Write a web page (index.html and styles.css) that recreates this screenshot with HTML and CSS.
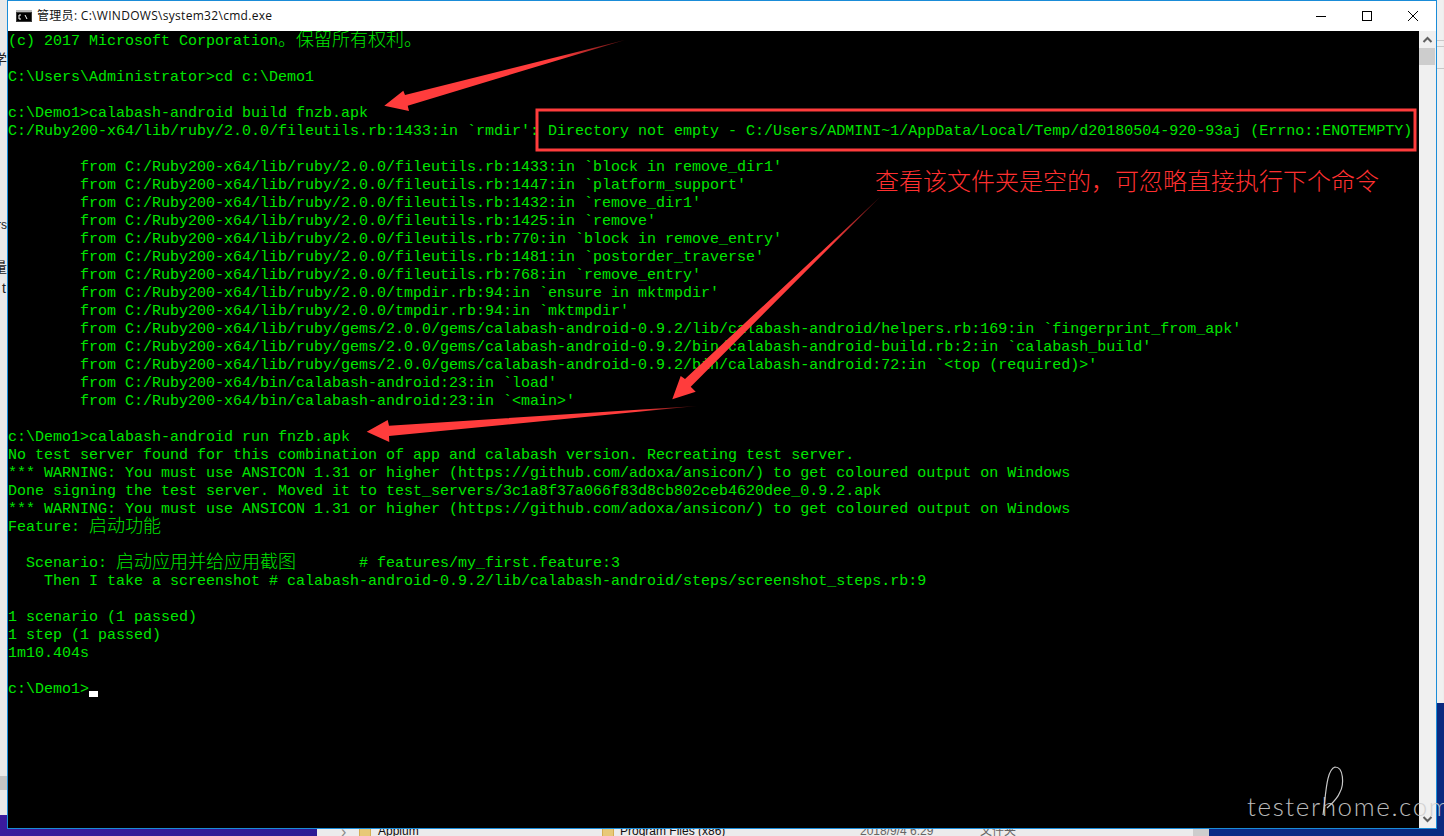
FILE: index.html
```html
<!DOCTYPE html>
<html lang="zh-CN">
<head>
<meta charset="utf-8">
<title>cmd.exe</title>
<link rel="stylesheet" href="styles.css">
</head>
<body>
<div class="desktop">
  <div class="bg-left">
    <span class="frag frag-a">学</span>
    <span class="frag frag-b">rs</span>
    <span class="frag frag-c">量</span>
    <span class="frag frag-d">t</span>
    <div class="bg-left-band"></div>
  </div>
  <div class="bg-right">
    <i class="rule rule-a"></i><i class="rule rule-b"></i><i class="rule rule-c"></i>
  </div>
  <div class="explorer">
    <span class="ex-chevron">›</span>
    <span class="ex-folder ex-folder-a"></span><span class="ex-name ex-name-a">Appium</span>
    <span class="ex-folder ex-folder-b"></span><span class="ex-name ex-name-b">Program Files (x86)</span>
    <span class="ex-name ex-date">2018/9/4 6:29</span>
    <span class="ex-name ex-type">文件夹</span>
    <span class="ex-scroll"></span>
  </div>

  <div class="window">
    <header class="titlebar">
      <svg class="app-icon" width="16" height="12" viewBox="0 0 16 12"><rect width="16" height="12" fill="#3a3a3a"/><rect x="0" y="0" width="16" height="2" fill="#b8b8b8"/><rect x="1" y="3" width="14" height="8" fill="#000"/><path d="M5 5H3v4h2M7 6v0M7 8v0M9 5l2 4" stroke="#fff" stroke-width="1" fill="none"/></svg>
      <span class="title-text">管理员: C:\WINDOWS\system32\cmd.exe</span>
      <div class="controls">
        <svg class="ctrl" width="46" height="30" viewBox="0 0 46 30"><path d="M18 15.5h10" stroke="#000" fill="none"/></svg>
        <svg class="ctrl" width="46" height="30" viewBox="0 0 46 30"><rect x="18.5" y="10.5" width="9" height="9" stroke="#000" fill="none"/></svg>
        <svg class="ctrl" width="46" height="30" viewBox="0 0 46 30"><path d="M18 10l10 10M28 10L18 20" stroke="#000" fill="none"/></svg>
      </div>
    </header>
    <div class="client">
      <main class="console">
<div class="ln">(c) 2017 Microsoft Corporation<span class="cn">。保留所有权利。</span></div>
<div class="ln"></div>
<div class="ln">C:\Users\Administrator&gt;cd c:\Demo1</div>
<div class="ln"></div>
<div class="ln">c:\Demo1&gt;calabash-android build fnzb.apk</div>
<div class="ln">C:/Ruby200-x64/lib/ruby/2.0.0/fileutils.rb:1433:in `rmdir': Directory not empty - C:/Users/ADMINI~1/AppData/Local/Temp/d20180504-920-93aj (Errno::ENOTEMPTY)</div>
<div class="ln"></div>
<div class="ln">        from C:/Ruby200-x64/lib/ruby/2.0.0/fileutils.rb:1433:in `block in remove_dir1'</div>
<div class="ln">        from C:/Ruby200-x64/lib/ruby/2.0.0/fileutils.rb:1447:in `platform_support'</div>
<div class="ln">        from C:/Ruby200-x64/lib/ruby/2.0.0/fileutils.rb:1432:in `remove_dir1'</div>
<div class="ln">        from C:/Ruby200-x64/lib/ruby/2.0.0/fileutils.rb:1425:in `remove'</div>
<div class="ln">        from C:/Ruby200-x64/lib/ruby/2.0.0/fileutils.rb:770:in `block in remove_entry'</div>
<div class="ln">        from C:/Ruby200-x64/lib/ruby/2.0.0/fileutils.rb:1481:in `postorder_traverse'</div>
<div class="ln">        from C:/Ruby200-x64/lib/ruby/2.0.0/fileutils.rb:768:in `remove_entry'</div>
<div class="ln">        from C:/Ruby200-x64/lib/ruby/2.0.0/tmpdir.rb:94:in `ensure in mktmpdir'</div>
<div class="ln">        from C:/Ruby200-x64/lib/ruby/2.0.0/tmpdir.rb:94:in `mktmpdir'</div>
<div class="ln">        from C:/Ruby200-x64/lib/ruby/gems/2.0.0/gems/calabash-android-0.9.2/lib/calabash-android/helpers.rb:169:in `fingerprint_from_apk'</div>
<div class="ln">        from C:/Ruby200-x64/lib/ruby/gems/2.0.0/gems/calabash-android-0.9.2/bin/calabash-android-build.rb:2:in `calabash_build'</div>
<div class="ln">        from C:/Ruby200-x64/lib/ruby/gems/2.0.0/gems/calabash-android-0.9.2/bin/calabash-android:72:in `&lt;top (required)&gt;'</div>
<div class="ln">        from C:/Ruby200-x64/bin/calabash-android:23:in `load'</div>
<div class="ln">        from C:/Ruby200-x64/bin/calabash-android:23:in `&lt;main&gt;'</div>
<div class="ln"></div>
<div class="ln">c:\Demo1&gt;calabash-android run fnzb.apk</div>
<div class="ln">No test server found for this combination of app and calabash version. Recreating test server.</div>
<div class="ln">*** WARNING: You must use ANSICON 1.31 or higher (https://github.com/adoxa/ansicon/) to get coloured output on Windows</div>
<div class="ln">Done signing the test server. Moved it to test_servers/3c1a8f37a066f83d8cb802ceb4620dee_0.9.2.apk</div>
<div class="ln">*** WARNING: You must use ANSICON 1.31 or higher (https://github.com/adoxa/ansicon/) to get coloured output on Windows</div>
<div class="ln">Feature: <span class="cn">启动功能</span></div>
<div class="ln"></div>
<div class="ln">  Scenario: <span class="cn">启动应用并给应用截图</span>       # features/my_first.feature:3</div>
<div class="ln">    Then I take a screenshot # calabash-android-0.9.2/lib/calabash-android/steps/screenshot_steps.rb:9</div>
<div class="ln"></div>
<div class="ln">1 scenario (1 passed)</div>
<div class="ln">1 step (1 passed)</div>
<div class="ln">1m10.404s</div>
<div class="ln"></div>
<div class="ln">c:\Demo1&gt;<span class="cursor"></span></div>
      </main>
      <aside class="scrollbar">
        <svg class="sb-arrow" width="17" height="17" viewBox="0 0 17 17"><path d="M4.5 11l4-4 4 4" stroke="#606060" stroke-width="2" fill="none"/></svg>
        <div class="sb-thumb"></div>
        <div class="sb-track"></div>
        <svg class="sb-arrow" width="17" height="17" viewBox="0 0 17 17"><path d="M4.5 6l4 4 4-4" stroke="#606060" stroke-width="2" fill="none"/></svg>
      </aside>
    </div>
  </div>

  <svg class="markup" width="1444" height="836" viewBox="0 0 1444 836">
    <defs>
      <linearGradient id="fade1" gradientUnits="userSpaceOnUse" x1="625" y1="40" x2="560" y2="60"><stop offset="0" stop-color="#5a1010"/><stop offset="1" stop-color="#ff3c3c"/></linearGradient>
      <linearGradient id="fade2" gradientUnits="userSpaceOnUse" x1="880" y1="197" x2="830" y2="245"><stop offset="0" stop-color="#5a1010"/><stop offset="1" stop-color="#ff3c3c"/></linearGradient>
      <linearGradient id="fade3" gradientUnits="userSpaceOnUse" x1="697" y1="406" x2="640" y2="411"><stop offset="0" stop-color="#3a0808"/><stop offset="1" stop-color="#ff3c3c"/></linearGradient>
    </defs>
    <rect x="537" y="110" width="878" height="40" fill="none" stroke="#ff3c3c" stroke-width="3"/>
    <polygon fill="url(#fade1)" points="625,40 405,95 403.3,90.7 384.3,105.7 409,111 407.7,105.7"/>
    <polygon fill="url(#fade2)" points="880,197 685,379 680.7,376 672.3,399.3 695.7,391.7 690.7,386.7"/>
    <polygon fill="url(#fade3)" points="697,406 389,425.7 387.7,420 366.7,431.7 389.3,442 389,436"/>
    <path class="wm-loop" d="M1323 815C1326 795 1326 770 1335 767C1344 767 1344 785 1340 792C1337 800 1330 805 1327 808"/>
  </svg>
  <div class="note">查看该文件夹是空的&#xFF0C;可忽略直接执行下个命令</div>
  <div class="watermark">testerhome.com</div>
</div>
</body>
</html>
```
FILE: styles.css
```css
* { box-sizing: border-box; }
html, body { margin: 0; padding: 0; }
body { width: 1444px; height: 836px; overflow: hidden; }

.desktop {
  position: relative;
  width: 1444px;
  height: 836px;
  overflow: hidden;
  background: linear-gradient(90deg, #3a1a9c 0, #2c1a94 320px, #0b2a86 1210px, #0a2a80 100%);
}

.bg-left {
  position: absolute;
  left: 0;
  top: 0;
  width: 7px;
  height: 815px;
  overflow: hidden;
  background: #e9e9e9;
}
.bg-left-band { position: absolute; left: 0; top: 776px; width: 7px; height: 14px; background: #c4c4c4; }
.frag { position: absolute; font: 14px/16px "Noto Sans CJK SC", sans-serif; color: #222; white-space: nowrap; }
.frag-a { right: 0; top: 50px; }
.frag-b { right: 0; top: 217px; font-size: 12px; font-family: "Liberation Sans", sans-serif; }
.frag-c { right: 0; top: 258px; }
.frag-d { right: 1px; top: 280px; font-family: "Liberation Sans", sans-serif; }

.bg-right {
  position: absolute;
  left: 1437px;
  top: 0;
  width: 7px;
  height: 703px;
  background: #f0f0f0;
  border-right: 1px solid #ededed;
}
.rule { position: absolute; left: 0; width: 7px; height: 1px; background: #c8c8c8; }
.rule-a { top: 40px; }
.rule-b { top: 46px; }
.rule-c { top: 68px; }

.explorer {
  position: absolute;
  left: 317px;
  top: 828px;
  width: 892px;
  height: 8px;
  overflow: hidden;
  background: #ececec;
  color: #111;
  font: 12px/16px "Liberation Sans", "Noto Sans CJK SC", sans-serif;
}
.ex-chevron { position: absolute; left: 24px; top: -4px; color: #888; font-size: 16px; }
.ex-folder { position: absolute; top: -4px; width: 12px; height: 14px; background: #e8c978; border: 1px solid #d6ae52; }
.ex-folder-a { left: 42px; }
.ex-folder-b { left: 285px; }
.ex-name { position: absolute; top: -5px; white-space: nowrap; }
.ex-name-a { left: 61px; }
.ex-name-b { left: 303px; }
.ex-date { left: 543px; color: #666; }
.ex-type { left: 663px; color: #666; }
.ex-scroll { position: absolute; left: 876px; top: 0; width: 16px; height: 8px; background: #cdcdcd; }

.window {
  position: absolute;
  left: 7px;
  top: 0;
  width: 1430px;
  height: 829px;
  display: flex;
  flex-direction: column;
  border: 1px solid #1a8cd8;
  background: #fff;
}

.titlebar {
  height: 30px;
  flex: none;
  display: flex;
  align-items: center;
  background: #fff;
  padding-left: 8px;
}
.app-icon { flex: none; margin-right: 5px; }
.title-text {
  flex: 1;
  font: 12px/30px "Open Sans", "Noto Sans CJK SC", sans-serif;
  letter-spacing: 0.3px;
  color: #111;
  white-space: nowrap;
}
.controls { display: flex; flex: none; }
.ctrl { display: block; }

.client { flex: 1; min-height: 0; display: flex; }

.console {
  flex: 1;
  min-width: 0;
  padding-top: 2px;
  background: #000;
  color: #00e600;
  font: 15px/18px "Liberation Mono", "Noto Sans CJK SC", monospace;
  overflow: hidden;
}
.ln { height: 18px; white-space: pre; overflow: visible; }
.cn { font: 300 18px/0 "Noto Sans CJK SC", sans-serif; vertical-align: -1px; }
.cursor {
  display: inline-block;
  width: 9px;
  height: 6px;
  background: #fff;
  vertical-align: -4px;
}

.scrollbar {
  width: 17px;
  flex: none;
  display: flex;
  flex-direction: column;
  background: #f0f0f0;
}
.sb-arrow { flex: none; display: block; }
.sb-thumb { flex: none; height: 17px; margin: 0 1px 0 0; background: #cdcdcd; }
.sb-track { flex: 1; }

.markup { position: absolute; left: 0; top: 0; pointer-events: none; }
.wm-loop { fill: none; stroke: #c8c8c8; stroke-width: 1.2; }

.note {
  position: absolute;
  left: 875px;
  top: 165px;
  color: #ff3030;
  font: 300 24px/30px "Noto Sans CJK SC", sans-serif;
  white-space: nowrap;
}

.watermark {
  position: absolute;
  left: 1247px;
  top: 788px;
  color: #cfcfcf;
  font: 300 26px/36px "Lato", sans-serif;
  letter-spacing: 1.6px;
  white-space: nowrap;
  opacity: .9;
}
```
